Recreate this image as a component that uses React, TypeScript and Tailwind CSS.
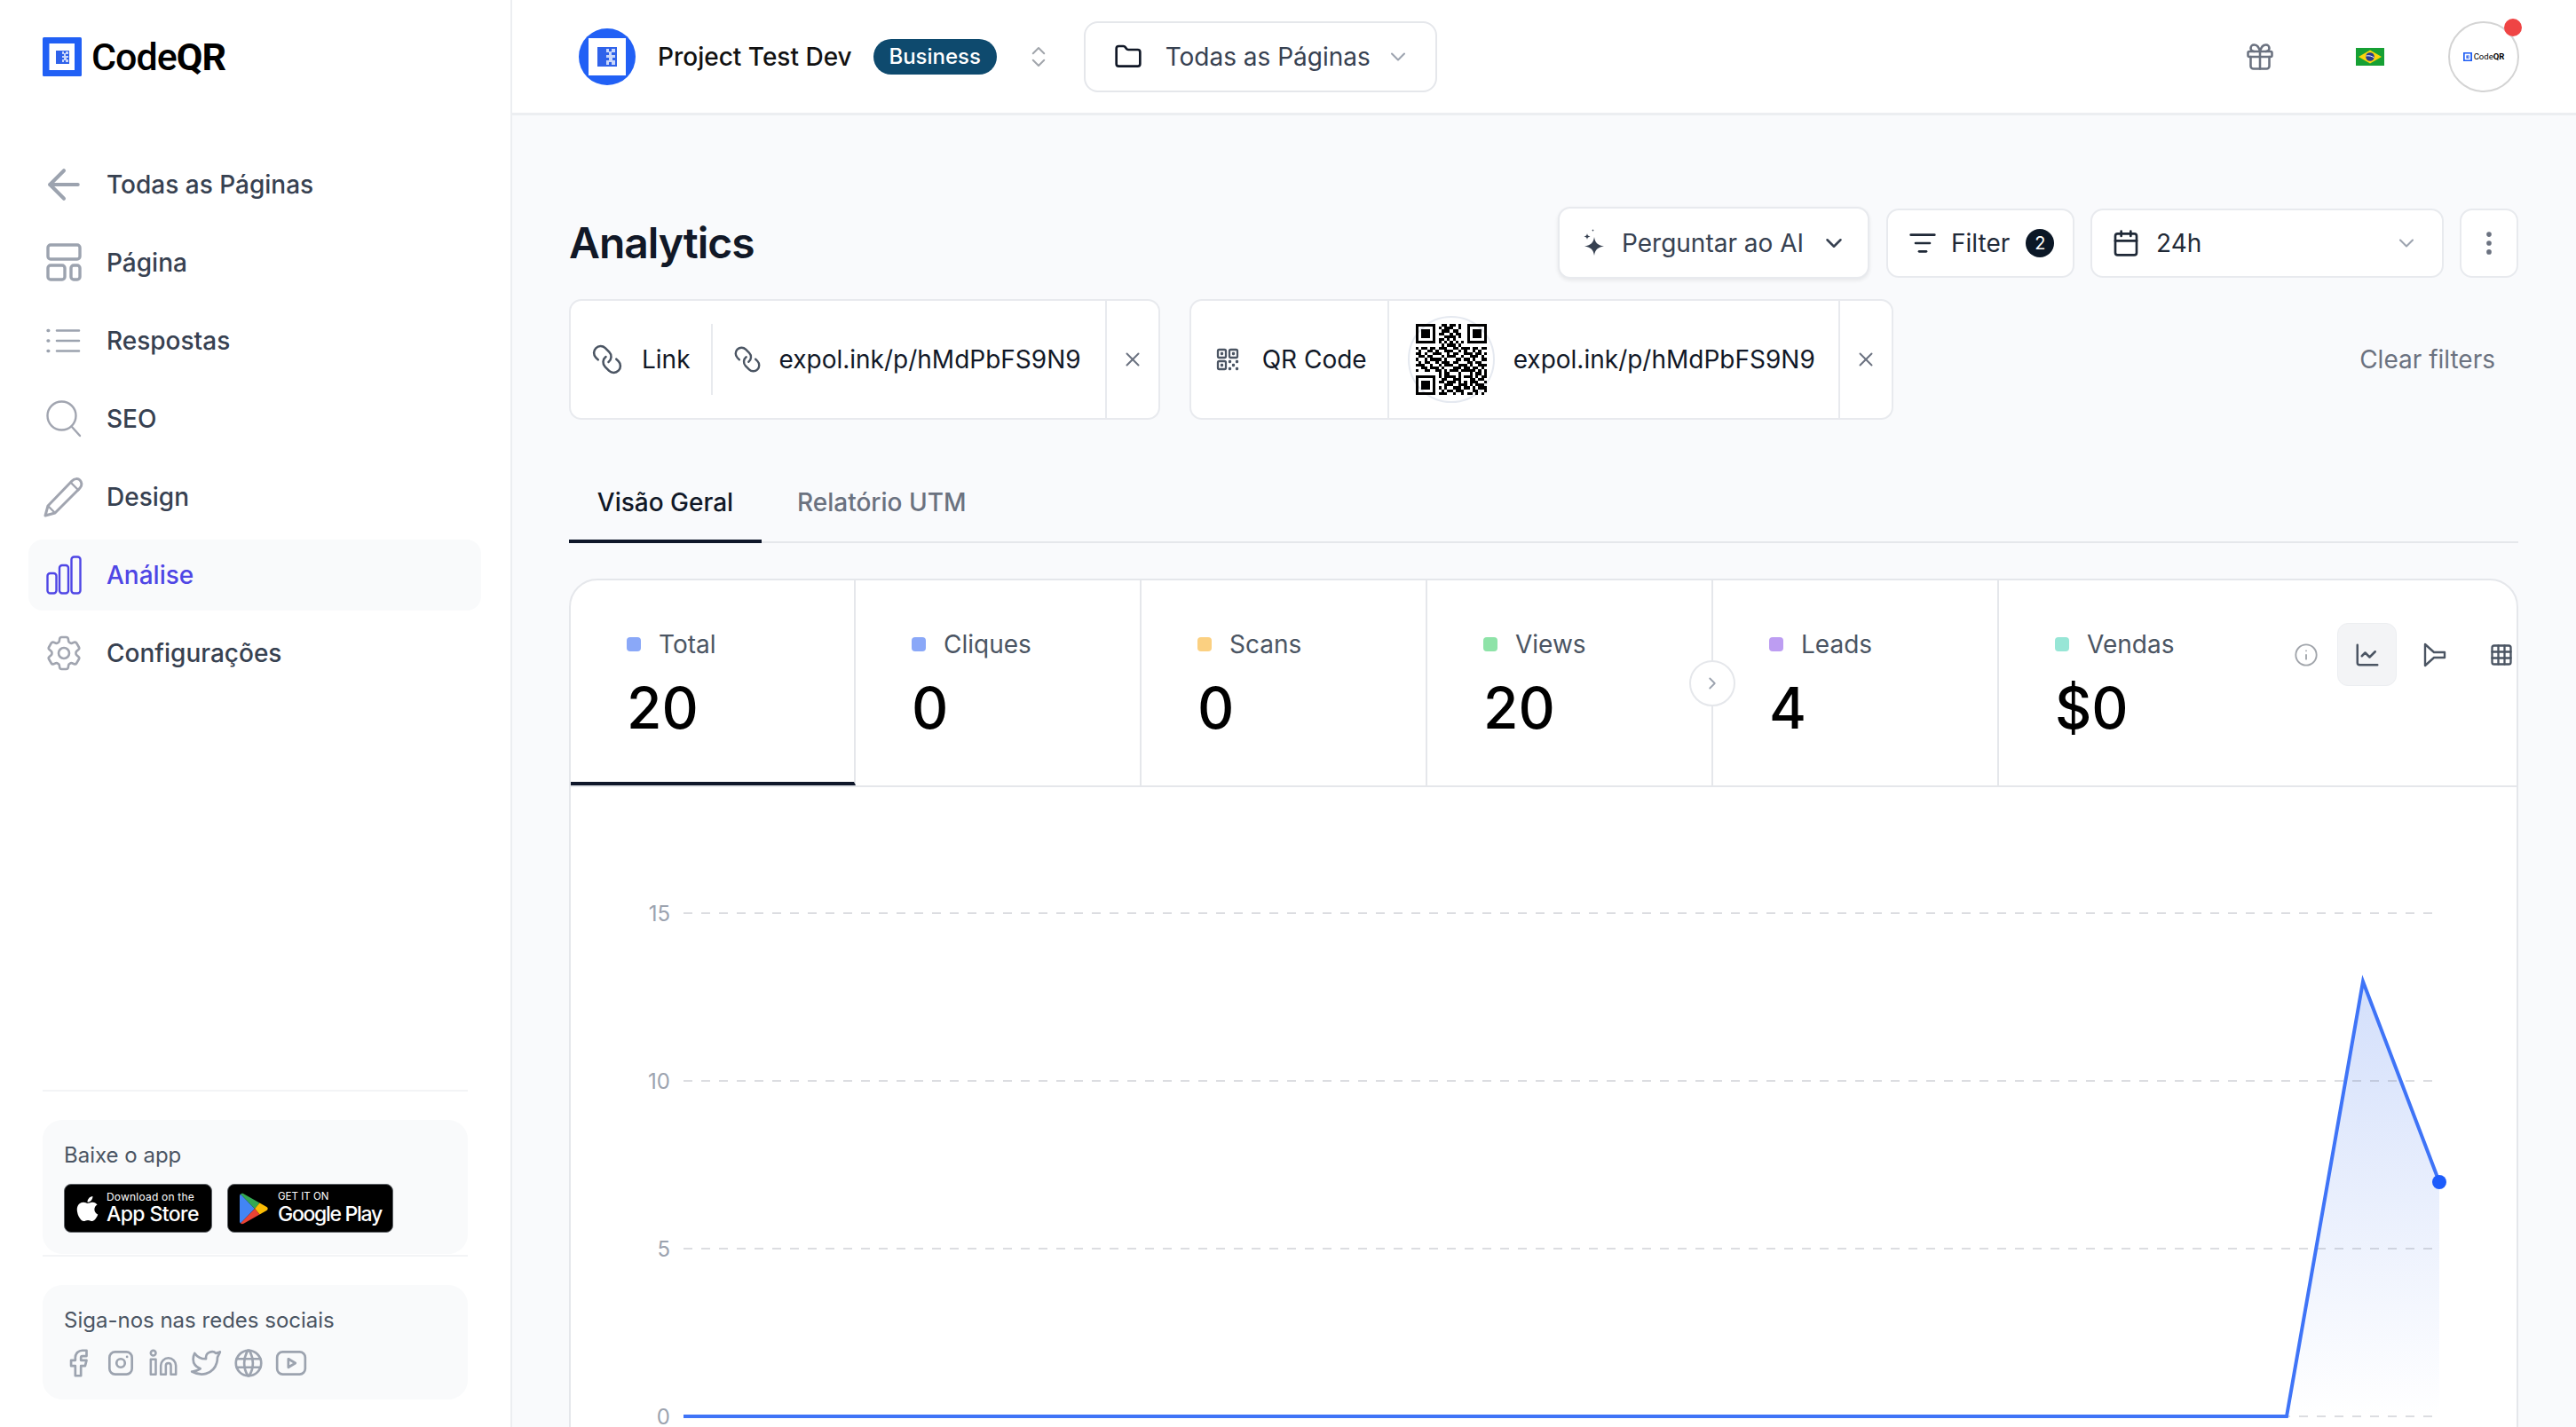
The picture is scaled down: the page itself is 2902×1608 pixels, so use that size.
import React from 'react';
import { ArrowLeft, Calendar, ChartLine, ChevronDown, ChevronRight, ChevronsUpDown, EllipsisVertical, Folder, Gift, Grid3x3, Info, Link, Linkedin, ListFilter, X } from 'lucide-react';
import { FaApple } from 'react-icons/fa';
import { HiOutlineCog6Tooth, HiOutlineQrCode } from 'react-icons/hi2';
import { TbBrandFacebook, TbBrandInstagram, TbBrandTwitter, TbBrandYoutube, TbWorld } from 'react-icons/tb';

const QR_ROWS = [
  '1111111 00110110100 1111111',
  '1000001 01011100100 1000001',
  '1011101 00111011000 1011101',
  '1011101 01100101100 1011101',
  '1011101 00011110100 1011101',
  '1000001 01101010000 1000001',
  '1111111 01010101010 1111111',
  '0000000 00101110100 0000000',
  '1011011011100110111011011',
  '0100110100111001010010100',
  '1101001110010110011101101',
  '0110110001011100100111010',
  '1001011110100011011010011',
  '0101100101110110001101100',
  '1110010010111001110100111',
  '0011011101000111011011010',
  '1001100110101110111110101',
  '00000000 10110001000101101',
  '1111111 0 10111101011101011',
  '1000001 0 01100111000110110',
  '1011101 0 11011101010111001',
  '1011101 0 00111001110101110',
  '1011101 0 10100111011010111',
  '1000001 0 01011011100011001',
  '1111111 0 11100100101101010',
].map((r) => r.replace(/ /g, ''));

function QrCode() {
  return (
    <svg viewBox="0 0 25 25" className="w-[80px] h-[80px]" shapeRendering="crispEdges">
      {QR_ROWS.map((row, y) =>
        row.split('').map((c, x) => (c === '1' ? <rect key={`${x}-${y}`} x={x} y={y} width={1} height={1} fill="#000" /> : null))
      )}
    </svg>
  );
}

function LogoMark({ className }: { className: string }) {
  return (
    <svg viewBox="0 0 44 44" className={className}>
      <rect width="44" height="44" rx="1.5" fill="#2160f5" />
      <rect x="7.5" y="7" width="28.5" height="30" fill="#fff" />
      <rect x="15" y="15" width="15" height="15" fill="#2f62ea" />
      <path d="M22 16h2v2h2v-2h3v3h-3v2h3v2h-2v2h2v3h-3v-2h-2v2h-2v-3h2v-2h-2v-2h2v-2h-2z" fill="#fff" opacity="0.75" />
    </svg>
  );
}

function ProjectAvatar() {
  return (
    <svg viewBox="0 0 64 64" className="w-[64px] h-[64px] shrink-0">
      <circle cx="32" cy="32" r="32" fill="#2160f5" />
      <rect x="11" y="11" width="42" height="42" fill="#fff" />
      <rect x="21" y="21" width="22" height="22" fill="#2f62ea" />
      <path d="M31 23h3v3h3v-3h4v4h-4v3h4v3h-3v3h3v5h-4v-3h-3v3h-3v-5h3v-3h-3v-3h3v-3h-3z" fill="#fff" opacity="0.75" />
    </svg>
  );
}

function IconPage() {
  return (
    <svg viewBox="0 0 40 44" className="w-[40px] h-[44px] shrink-0" fill="none" stroke="#9ca3af" strokeWidth="3.4">
      <rect x="2" y="2" width="36" height="16" rx="3" />
      <rect x="2" y="25" width="19" height="16" rx="3" />
      <rect x="28" y="25" width="10" height="16" rx="3" />
    </svg>
  );
}

function IconList() {
  return (
    <svg viewBox="0 0 40 28" className="w-[40px] h-[28px] shrink-0" fill="none" stroke="#9ca3af" strokeWidth="2.6" strokeLinecap="round">
      <path d="M12 2.5h25M12 14h25M12 25.5h25" />
      <path d="M2 2.5h.8M2 14h.8M2 25.5h.8" strokeWidth="3.4" />
    </svg>
  );
}

function IconSearch() {
  return (
    <svg viewBox="0 0 40 42" className="w-[40px] h-[42px] shrink-0" fill="none" stroke="#a1a5b0" strokeWidth="2.4" strokeLinecap="round">
      <circle cx="17.5" cy="17.5" r="16" />
      <path d="M29 30l9 10" />
    </svg>
  );
}

function IconPencil() {
  return (
    <svg viewBox="0 0 46 46" className="w-[46px] h-[46px] shrink-0" fill="none" stroke="#a1a5b0" strokeWidth="3" strokeLinejoin="round">
      <path d="M2 44l3-11L32 5c3-3 7-3 9-1s3 6 0 9L13 41z" />
      <path d="M5 33l8 8M31 7l9 9" strokeWidth="2.4" />
    </svg>
  );
}

function IconBars() {
  return (
    <svg viewBox="0 0 40 44" className="w-[40px] h-[44px] shrink-0" fill="none" stroke="#4f46e5" strokeWidth="2.4">
      <rect x="1.5" y="20" width="10" height="22.5" rx="3" />
      <rect x="15" y="11" width="10" height="31.5" rx="3" />
      <rect x="28.5" y="1.5" width="10" height="41" rx="3" />
    </svg>
  );
}

function IconSparkle({ className }: { className: string }) {
  return (
    <svg viewBox="0 0 26 32" className={className} fill="#374151">
      <path d="M13 9c1 6.500 3.500 9.200 11 10.500-7.500 1.300-10 4-11 10.500-1-6.500-3.500-9.200-11-10.500C9.500 18.200 12 15.500 13 9z" />
      <path d="M5 5c.4 2.300 1.200 3.100 3.500 3.500C6.200 9 5.400 9.700 5 12c-.4-2.300-1.200-3-3.500-3.500C3.800 8.100 4.600 7.300 5 5z" />
      <path d="M11.500 0c.2 1 .5 1.400 1.500 1.600-1 .2-1.300.6-1.500 1.600-.2-1-.5-1.400-1.500-1.600 1-.2 1.300-.6 1.500-1.600z" />
    </svg>
  );
}

function IconFunnelSide() {
  return (
    <svg viewBox="0 0 28 28" className="w-[28px] h-[28px]" fill="none" stroke="#4b5563" strokeWidth="2.4" strokeLinejoin="round">
      <path d="M3 2l10 9h12v6H13L3 26z" />
    </svg>
  );
}

function BrazilFlag() {
  return (
    <svg viewBox="0 0 32 20" className="w-[32px] h-[20px]">
      <rect width="32" height="20" fill="#16a034" />
      <path d="M16 2.500L29 10 16 17.500 3 10z" fill="#fbd40c" />
      <circle cx="16" cy="10" r="4.800" fill="#283b8f" />
      <path d="M11.500 9c3-.6 6.500 0 9 2" stroke="#fff" strokeWidth="1" fill="none" />
    </svg>
  );
}

function GooglePlayIcon() {
  return (
    <svg viewBox="0 0 32 36" className="w-[32px] h-[36px] shrink-0">
      <path d="M1 1.500C.4 2 0 2.800 0 3.800v28.400c0 1 .4 1.800 1 2.300L17 18z" fill="#4285f4" />
      <path d="M1 1.500c1-.9 2.300-1 3.500-.3L22.500 11.500 17 18z" fill="#34a853" />
      <path d="M22.500 11.500l7.500 4.300c2.200 1.300 2.200 3.100 0 4.400L22.500 24.500 17 18z" fill="#fbbc04" />
      <path d="M1 34.500c1 .9 2.300 1 3.500.3L22.500 24.500 17 18z" fill="#ea4335" />
    </svg>
  );
}

const NAV_ITEMS = [
  { label: 'Todas as Páginas', icon: <ArrowLeft className="w-[54px] h-[54px] shrink-0 text-[#9ca3af]" strokeWidth={1.8} /> },
  { label: 'Página', icon: <IconPage /> },
  { label: 'Respostas', icon: <IconList /> },
  { label: 'SEO', icon: <IconSearch /> },
  { label: 'Design', icon: <IconPencil /> },
  { label: 'Análise', icon: <IconBars />, active: true },
  { label: 'Configurações', icon: <HiOutlineCog6Tooth className="w-[48px] h-[48px] shrink-0 text-[#a1a5b0]" strokeWidth={1.3} /> },
];

const METRICS = [
  { label: 'Total', value: '20', dot: 'bg-[#8aa8f8]', width: 'w-[321px]', active: true },
  { label: 'Cliques', value: '0', dot: 'bg-[#8aa8f8]', width: 'w-[322px]' },
  { label: 'Scans', value: '0', dot: 'bg-[#fbd081]', width: 'w-[322px]' },
  { label: 'Views', value: '20', dot: 'bg-[#8ee3a8]', width: 'w-[322px]' },
  { label: 'Leads', value: '4', dot: 'bg-[#bd9df2]', width: 'w-[322px]' },
];

function MetricLabel({ label, dot }: { label: string; dot: string }) {
  return (
    <div className="flex items-center gap-[20px] h-[36px]">
      <span className={`w-[16px] h-[16px] rounded-[4px] ${dot}`} />
      <span className="text-[28px] text-[#4b5563]">{label}</span>
    </div>
  );
}

function Sidebar() {
  const socialClass = 'w-[38px] h-[38px] shrink-0 text-[#9ca3af]';
  return (
    <aside className="w-[577px] h-full shrink-0 flex flex-col bg-white border-r-[2px] border-[#eceef1]">
      <div className="flex items-center gap-[11px] pl-[48px] pt-[42px]">
        <LogoMark className="w-[44px] h-[44px]" />
        <span className="font-['Roboto',sans-serif] text-[43px] leading-none font-medium tracking-[-1px] text-black">
          Code<span className="font-bold">QR</span>
        </span>
      </div>

      <nav className="flex flex-col gap-[8px] ml-[32px] w-[510px] mt-[82px]">
        {NAV_ITEMS.map((item) => (
          <div key={item.label} className={`flex items-center h-[80px] pl-[20px] rounded-[16px] ${item.active ? 'bg-[#f9fafb]' : ''}`}>
            <span className="w-[40px] flex items-center justify-center">{item.icon}</span>
            <span className={`ml-[28px] text-[28px] font-medium ${item.active ? 'text-[#4f46e5]' : 'text-[#374151]'}`}>{item.label}</span>
          </div>
        ))}
      </nav>

      <div className="mt-auto ml-[48px] w-[479px]">
        <div className="border-t-[2px] border-[#f3f4f6] pt-[32px]">
          <div className="h-[151px] rounded-[22px] bg-[#f9fafb] pl-[24px] pt-[24px]">
            <p className="text-[24px] leading-[32px] text-[#4b5563]">Baixe o app</p>
            <div className="flex gap-[17px] mt-[16px]">
              <div className="w-[167px] h-[55px] bg-black rounded-[8px] border border-[#5f6368] flex items-center pl-[12px] text-white whitespace-nowrap">
                <FaApple className="w-[27px] h-[32px] shrink-0" />
                <div className="ml-[8px] flex flex-col">
                  <span className="text-[12px] leading-[14px] tracking-[0.2px]">Download on the</span>
                  <span className="text-[23px] leading-[25px] font-medium tracking-[-0.6px]">App Store</span>
                </div>
              </div>
              <div className="w-[187px] h-[55px] bg-black rounded-[8px] border border-[#5f6368] flex items-center pl-[13px] text-white whitespace-nowrap">
                <GooglePlayIcon />
                <div className="ml-[11px] flex flex-col">
                  <span className="text-[11.500px] leading-[13px]">GET IT ON</span>
                  <span className="text-[23px] leading-[27px] font-medium tracking-[-1.300px]">Google Play</span>
                </div>
              </div>
            </div>
          </div>
        </div>
        <div className="border-t-[2px] border-[#f3f4f6] mt-[1px] pt-[32px] pb-[31px]">
          <div className="h-[129px] rounded-[22px] bg-[#f9fafb] pl-[24px] pt-[24px]">
            <p className="text-[24px] leading-[32px] text-[#4b5563]">Siga-nos nas redes sociais</p>
            <div className="flex items-center gap-[10px] mt-[13px] -ml-[3px]">
              <TbBrandFacebook className={socialClass} strokeWidth={1.7} />
              <TbBrandInstagram className={socialClass} strokeWidth={1.7} />
              <span className="w-[38px] flex justify-center"><Linkedin className="w-[34px] h-[34px] text-[#9ca3af]" strokeWidth={1.8} /></span>
              <TbBrandTwitter className={socialClass} strokeWidth={1.7} />
              <TbWorld className={socialClass} strokeWidth={1.7} />
              <TbBrandYoutube className={socialClass} strokeWidth={1.7} />
            </div>
          </div>
        </div>
      </div>
    </aside>
  );
}

function TopBar() {
  return (
    <header className="h-[130px] shrink-0 bg-white border-b-[3px] border-[#eceef1] flex items-center pl-[75px] pr-[64px]">
      <ProjectAvatar />
      <span className="ml-[25px] text-[28px] font-medium text-[#111]">Project Test Dev</span>
      <span className="ml-[24px] w-[139px] h-[40px] rounded-full bg-[#0e4a6e] text-white text-[24px] font-medium flex items-center justify-center">Business</span>
      <ChevronsUpDown className="ml-[32px] w-[30px] h-[30px] text-[#a1a5ab]" strokeWidth={1.6} />
      <div className="ml-[36px] w-[398px] h-[80px] rounded-[16px] border-[2px] border-[#e5e7eb] bg-white flex items-center pl-[32px]">
        <Folder className="w-[32px] h-[32px] text-[#111827]" strokeWidth={2} />
        <span className="ml-[26px] text-[28px] text-[#374151]">Todas as Páginas</span>
        <ChevronDown className="ml-[17px] w-[28px] h-[28px] text-[#9ca3af]" strokeWidth={1.8} />
      </div>
      <div className="ml-auto flex items-center">
        <Gift className="w-[36px] h-[36px] text-[#6b7280]" strokeWidth={1.7} />
        <span className="ml-[90px]"><BrazilFlag /></span>
        <div className="relative ml-[72px] w-[80px] h-[80px] rounded-full border-[2px] border-[#d4d4d4] bg-white flex items-center justify-center gap-[2px]">
          <LogoMark className="w-[10px] h-[10px]" />
          <span className="font-['Roboto',sans-serif] text-[9.500px] leading-none text-black">Code<span className="font-bold">QR</span></span>
          <span className="absolute -top-[5px] right-[-5px] w-[20px] h-[20px] rounded-full bg-[#ef4444]" />
        </div>
      </div>
    </header>
  );
}

function FilterChip({ children }: { children: React.ReactNode }) {
  return <div className="h-[136px] rounded-[14px] border-[2px] border-[#e8eaee] bg-white flex items-center shrink-0">{children}</div>;
}

function ChipClose() {
  return (
    <div className="w-[60px] h-full border-l-[2px] border-[#e8eaee] flex items-center justify-center">
      <X className="w-[26px] h-[26px] text-[#6b7280]" strokeWidth={1.8} />
    </div>
  );
}

function Chart() {
  // offsets from the card's inner corner
  const ox = 643;
  const oy = 887;
  const grid = [
    { label: '15', y: 1029 },
    { label: '10', y: 1218 },
    { label: '5', y: 1407 },
    { label: '0', y: 1596 },
  ];
  const pts = `${770 - ox},${1596 - oy} ${2576 - ox},${1596 - oy} ${2662 - ox},${1106 - oy} ${2748 - ox},${1332 - oy}`;
  return (
    <svg width="2192" height="720" viewBox="0 0 2192 720" className="block">
      <defs>
        <linearGradient id="area" x1="0" y1="0" x2="0" y2="1">
          <stop offset="0" stopColor="#d3dffb" />
          <stop offset="1" stopColor="#ffffff" />
        </linearGradient>
      </defs>
      <polygon points={`${2576 - ox},${1596 - oy} ${2662 - ox},${1106 - oy} ${2748 - ox},${1332 - oy} ${2748 - ox},${1596 - oy}`} fill="url(#area)" />
      {grid.map((g) => (
        <g key={g.label}>
          <line x1={770 - ox} x2={2741 - ox} y1={g.y - oy} y2={g.y - oy} stroke="#6b7280" strokeOpacity="0.24" strokeWidth="2" strokeDasharray="10 10" />
          <text x={755 - ox} y={g.y - oy + 9} textAnchor="end" fontSize="24" fill="#9ca3af">{g.label}</text>
        </g>
      ))}
      <polyline points={pts} fill="none" stroke="#3f74f7" strokeWidth="4" />
      <circle cx={2748 - ox} cy={1332 - oy} r="8" fill="#1d5cfb" />
    </svg>
  );
}

export default function App() {
  return (
    <div className="w-[2902px] h-[1608px] flex overflow-hidden bg-[#f9fafc] font-['Inter',sans-serif]">
      <Sidebar />
      <main className="flex-1 min-w-0 flex flex-col">
        <TopBar />
        <div className="pl-[64px] pr-[65px] pt-[103px]">
          {/* Title and actions */}
          <div className="flex items-center h-[81px]">
            <h1 className="text-[48px] font-semibold text-[#111827] tracking-[-1px]">Analytics</h1>
            <div className="ml-auto flex items-center">
              <div className="w-[351px] h-[81px] rounded-[14px] border-[2px] border-[#e8eaee] bg-white shadow-[0_2px_4px_rgba(0,0,0,0.08)] flex items-center pl-[26px]">
                <IconSparkle className="w-[26px] h-[32px]" />
                <span className="ml-[18px] text-[28px] text-[#374151]">Perguntar ao AI</span>
                <ChevronDown className="ml-[19px] w-[30px] h-[30px] text-[#374151]" strokeWidth={2} />
              </div>
              <div className="ml-[19px] w-[212px] h-[78px] rounded-[14px] border-[2px] border-[#e8eaee] bg-white flex items-center pl-[23px]">
                <ListFilter className="w-[32px] h-[32px] text-[#1f2937]" strokeWidth={2} />
                <span className="ml-[16px] text-[28px] text-[#1f2937]">Filter</span>
                <span className="ml-[18px] w-[32px] h-[32px] rounded-full bg-[#0b1726] text-white text-[20px] flex items-center justify-center">2</span>
              </div>
              <div className="ml-[18px] w-[398px] h-[78px] rounded-[14px] border-[2px] border-[#e8eaee] bg-white flex items-center pl-[22px]">
                <Calendar className="w-[32px] h-[32px] text-[#1f2937]" strokeWidth={2} />
                <span className="ml-[18px] text-[28px] text-[#1f2937]">24h</span>
                <ChevronDown className="ml-auto mr-[26px] w-[28px] h-[28px] text-[#9ca3af]" strokeWidth={1.8} />
              </div>
              <div className="ml-[18px] w-[66px] h-[78px] rounded-[14px] border-[2px] border-[#e8eaee] bg-white flex items-center justify-center">
                <EllipsisVertical className="w-[34px] h-[34px] text-[#6b7280]" strokeWidth={2} />
              </div>
            </div>
          </div>

          {/* Active filters */}
          <div className="flex items-center mt-[23px]">
            <FilterChip>
              <Link className="ml-[23px] w-[36px] h-[36px] text-[#4b5563] rotate-90" strokeWidth={1.7} />
              <span className="ml-[21px] text-[28px] text-[#111827]">Link</span>
              <span className="ml-[23px] w-[2px] h-[80px] bg-[#e8eaee]" />
              <Link className="ml-[23px] w-[32px] h-[32px] text-[#4b5563] rotate-90" strokeWidth={1.8} />
              <span className="ml-[20px] mr-[27px] text-[28px] text-[#111827]">expol.ink/p/hMdPbFS9N9</span>
              <ChipClose />
            </FilterChip>
            <div className="ml-[33px]">
              <FilterChip>
                <HiOutlineQrCode className="ml-[25px] w-[32px] h-[32px] text-[#4b5563]" strokeWidth={1.7} />
                <span className="ml-[23px] text-[28px] text-[#111827]">QR Code</span>
                <div className="ml-[23px] h-full border-l-[2px] border-[#e8eaee] flex items-center pl-[21px]">
                  <div className="w-[98px] h-[98px] rounded-full border-[2px] border-[#e5e9f0] flex items-center justify-center">
                    <QrCode />
                  </div>
                </div>
                <span className="ml-[21px] mr-[26px] text-[28px] text-[#111827]">expol.ink/p/hMdPbFS9N9</span>
                <ChipClose />
              </FilterChip>
            </div>
            <span className="ml-auto mr-[26px] text-[28px] text-[#6b7280]">Clear filters</span>
          </div>

          {/* Tabs */}
          <div className="flex mt-[67px] h-[72px] border-b-[2px] border-[#e5e7eb]">
            <div className="w-[217px] h-[72px] border-b-[4px] border-[#0f172a] flex items-start justify-center pt-[8px]">
              <span className="text-[28px] leading-[36px] font-medium text-[#111827]">Visão Geral</span>
            </div>
            <div className="ml-[40px] pt-[8px]">
              <span className="text-[28px] leading-[36px] font-medium text-[#6b7280]">Relatório UTM</span>
            </div>
          </div>

          {/* Metrics card */}
          <div className="mt-[40px] h-[1100px] rounded-t-[32px] border-[2px] border-[#e5e7eb] bg-white overflow-hidden">
            <div className="flex h-[233px] border-b-[2px] border-[#e5e7eb]">
              {METRICS.map((m, i) => (
                <div key={m.label} className={`relative ${m.width} h-[231px] shrink-0 border-r-[2px] border-[#e5e7eb] pl-[63px] pt-[54px] ${m.active ? 'border-b-[4px] border-b-[#0f172a]' : ''}`}>
                  <MetricLabel label={m.label} dot={m.dot} />
                  <p className="mt-[23px] text-[64px] leading-[62px] font-medium text-black">{m.value}</p>
                  {i === 3 && (
                    <span className="absolute top-[90px] right-[-27px] z-10 w-[52px] h-[52px] rounded-full border-[2px] border-[#e5e7eb] bg-white flex items-center justify-center">
                      <ChevronRight className="w-[22px] h-[22px] text-[#9ca3af]" strokeWidth={2} />
                    </span>
                  )}
                </div>
              ))}
              <div className="flex-1 min-w-0 flex justify-between pl-[63px] pt-[54px]">
                <div>
                  <MetricLabel label="Vendas" dot="bg-[#97e6d6]" />
                  <p className="mt-[23px] text-[64px] leading-[62px] font-medium text-black">$0</p>
                </div>
                <div className="flex items-center self-start -mt-[6px] h-[71px] pr-[3px]">
                  <Info className="w-[28px] h-[28px] text-[#a1a5ab]" strokeWidth={1.6} />
                  <span className="ml-[21px] w-[67px] h-[71px] rounded-[12px] bg-[#f3f4f6] border border-[#eceef1] flex items-center justify-center">
                    <ChartLine className="w-[30px] h-[30px] text-[#4b5563]" strokeWidth={2} />
                  </span>
                  <span className="ml-[29px]"><IconFunnelSide /></span>
                  <Grid3x3 className="ml-[47px] w-[28px] h-[28px] text-[#4b5563]" strokeWidth={2} />
                </div>
              </div>
            </div>
            <Chart />
          </div>
        </div>
      </main>
    </div>
  );
}
